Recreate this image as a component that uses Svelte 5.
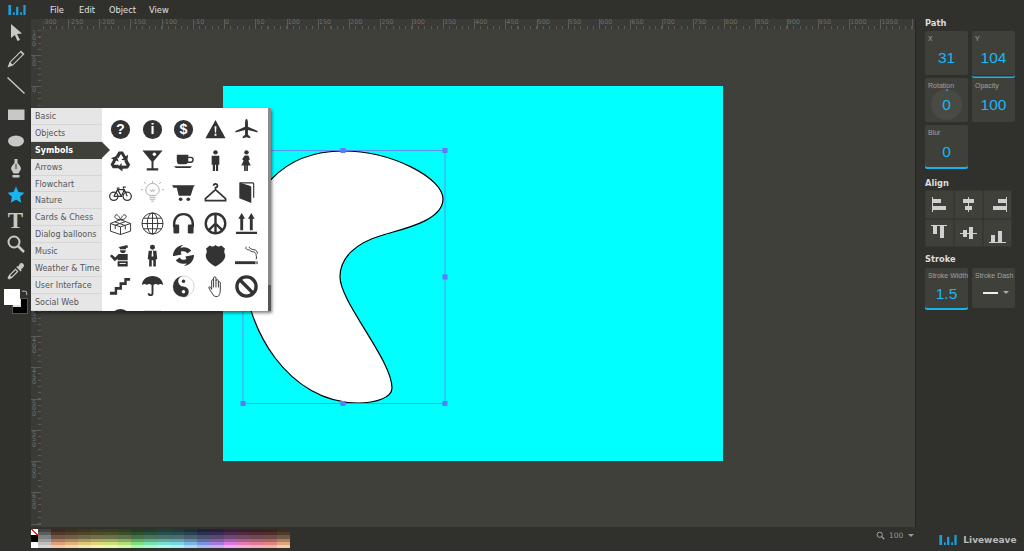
<script>
	const menus = ['File', 'Edit', 'Object', 'View'];
	const categories = ['Basic', 'Objects', 'Symbols', 'Arrows', 'Flowchart', 'Nature', 'Cards & Chess', 'Dialog balloons', 'Music', 'Weather & Time', 'User Interface', 'Social Web'];

	const hTicks = [];
	for (let v = -300; v <= 1050; v += 50) hTicks.push(v);
	const vTicks = [];
	for (let v = -100; v <= 650; v += 50) vTicks.push(v);

	const hues = [22, 34, 45, 55, 70, 88, 120, 150, 172, 186, 205, 228, 265, 295, 325, 345, 5, 25];
	const rows = [
		[40, 18], [30, 24], [22, 36], [32, 52], [60, 68], [85, 82]
	];
	const greys = [26, 36, 50, 62, 74, 84];
</script>

{#snippet logo(cls)}
	<svg class={cls} viewBox="0 0 19 11">
		<rect x="0" y="0" width="3" height="11" />
		<rect x="5" y="8" width="2" height="3" />
		<rect x="8.5" y="2" width="2.5" height="9" />
		<rect x="13" y="8" width="2" height="3" />
		<rect x="16.5" y="0" width="2.5" height="11" />
	</svg>
{/snippet}

<div class="app">
	<header class="topbar">
		{@render logo('logo')}
		<nav class="menu">
			{#each menus as m}<span>{m}</span>{/each}
		</nav>
	</header>

	<aside class="tools">
		<svg class="tool" viewBox="0 0 20 20"><path d="M5 2l11 9.500-5 .5 3 6-2.500 1-2.700-6L5 16z" /></svg>
		<svg class="tool" viewBox="0 0 20 20"><path d="M15 1.500l3.500 3.500L7 16.500 1.500 18.500 3.500 13zM4.500 13.500l2 2L16.500 5.500l-2-2z" /></svg>
		<svg class="tool" viewBox="0 0 20 20"><path d="M1.500 2.500L18.500 18.500" stroke="#c8c8c8" stroke-width="1.500" fill="none" /></svg>
		<svg class="tool gap" viewBox="0 0 20 20"><rect x="2" y="4.500" width="16.500" height="10.500" /></svg>
		<svg class="tool" viewBox="0 0 20 20"><ellipse cx="10" cy="10" rx="8" ry="5.500" /></svg>
		<svg class="tool" viewBox="0 0 20 20"><path d="M8.500 1h3v4c2 2 3.500 4 3.500 6l-2.500 4.500h-5L5 11c0-2 1.500-4 3.500-6zM6.500 17h7v2.500h-7z" /><path d="M10 6v5" stroke="#2e2e2a" stroke-width="1" /></svg>
		<svg class="tool star" viewBox="0 0 20 20"><path d="M10 1.500l2.500 5.500 6 .7-4.500 4 1.300 6L10 14.800 4.700 17.700 6 11.700l-4.500-4 6-.7z" /></svg>
		<span class="tool-t">T</span>
		<svg class="tool glass" viewBox="0 0 20 20"><circle cx="8" cy="8" r="5.500" fill="none" stroke="#c8c8c8" stroke-width="2" /><path d="M12 12l6 6" stroke="#c8c8c8" stroke-width="2.500" /></svg>
		<svg class="tool" viewBox="0 0 20 20"><path d="M14 2.500a2.500 2.500 0 0 1 3.500 3.500L15 8.500l.8.8-1.200 1.200-4.400-4.400 1.200-1.200.8.8zM9.500 7.500l3 3L6 17l-3 1.500L1.500 17 3 14zM9.500 9.200L4.200 14.500l1.300 1.300 5.300-5.300z" fill-rule="evenodd" /></svg>
		<div class="swatches">
			<i class="stroke-swatch"><b></b></i>
			<i class="fill-swatch"></i>
			<svg class="swap" viewBox="0 0 8 8"><path d="M1 2.500h3.500a2 2 0 0 1 2 2V7" fill="none" stroke="#ccc" stroke-width="1" /></svg>
		</div>
	</aside>

	<main class="workspace">
		<div class="corner"></div>
		<div class="ruler-h">
			{#each hTicks as t}<span>{t}</span>{/each}
			<span></span>
		</div>
		<div class="ruler-v">
			{#each vTicks as t}<span><em>{Math.abs(t)}</em></span>{/each}
			<span></span>
		</div>
		<div class="stage">
			<div class="artboard"></div>
			<svg class="drawing" viewBox="41 29 874 498">
				<path d="M343 151C392 151 443 178 443 199C443 222 398 230 383 235C355 243 340 258 340 277C340 302 392 360 392 388C392 398 375 403 358 403C290 403 243 330 243 260C243 190 285 151 343 151Z" fill="#fff" stroke="#000" stroke-width="1.200" />
				<rect x="243" y="150.500" width="202" height="253" fill="none" stroke="#6f78ff" stroke-width="0.800" />
				<g fill="#5f78ff">
					<rect x="240.500" y="401" width="5" height="5" />
					<rect x="340.500" y="148" width="5" height="5" />
					<rect x="340.500" y="401" width="5" height="5" />
					<rect x="442.500" y="148" width="5" height="5" />
					<rect x="442.500" y="274.500" width="5" height="5" />
					<rect x="442.500" y="401" width="5" height="5" />
				</g>
			</svg>
		</div>
	</main>

	<aside class="panel">
		<h3 class="path-title">Path</h3>
		<div class="cards">
			<div class="card"><label>X</label><strong>31</strong></div>
			<div class="card on"><label>Y</label><strong>104</strong></div>
			<div class="card"><label>Rotation</label><i class="dial"></i><strong>0</strong></div>
			<div class="card"><label>Opacity</label><strong>100</strong></div>
			<div class="card flush tall"><label>Blur</label><strong>0</strong></div>
		</div>
		<h3 class="align-title">Align</h3>
		<div class="align">
			<div><svg viewBox="0 0 29 29"><path d="M7 7h1v15H7z" /><path d="M8 9h8v4H8zM8 16h13v4H8z" /></svg></div>
			<div><svg viewBox="0 0 29 29"><path d="M14 7h1v15h-1z" /><path d="M9 9h11v4H9zM11 16h7v4h-7z" /></svg></div>
			<div><svg viewBox="0 0 29 29"><path d="M23 7h1v15h-1z" /><path d="M15 9h8v4h-8zM10 16h13v4H10z" /></svg></div>
			<div><svg viewBox="0 0 29 29"><path d="M6 6h16v1H6z" /><path d="M8 7h4v8H8zM15 7h4v12h-4z" /></svg></div>
			<div><svg viewBox="0 0 29 29"><path d="M6 14h17v1H6z" /><path d="M9 11h4v7H9zM15 8h4v12h-4z" /></svg></div>
			<div><svg viewBox="0 0 29 29"><path d="M6 23h17v1H6z" /><path d="M8 16h4v7H8zM15 12h4v11h-4z" /></svg></div>
		</div>
		<h3 class="stroke-title">Stroke</h3>
		<div class="cards">
			<div class="card short flush"><label>Stroke Width</label><strong>1.5</strong></div>
			<div class="card short"><label>Stroke Dash</label><div class="dash"><i></i><b></b></div></div>
		</div>
	</aside>

	<footer class="bottombar">
		<div class="palette">
			<div class="base">
				<i class="none"></i><i class="black"></i><i class="white"></i>
			</div>
			<div class="col">
				{#each greys as g}<i style="background:hsl(0,0%,{g}%)"></i>{/each}
			</div>
			{#each hues as h}
				<div class="col">
					{#each rows as r}<i style="background:hsl({h},{r[0]}%,{r[1]}%)"></i>{/each}
				</div>
			{/each}
		</div>
		<div class="zoom">
			<svg viewBox="0 0 12 12"><circle cx="5" cy="5" r="3.500" fill="none" stroke="#aaa" stroke-width="1.200" /><path d="M7.500 7.500l3.500 3.500" stroke="#aaa" stroke-width="1.500" /></svg>
			<span>100</span>
			<i class="caret"></i>
		</div>
		<div class="brand">
			{@render logo('logo small')}
			<span>Liveweave</span>
		</div>
	</footer>

	<section class="shapes">
		<ul class="cats">
			{#each categories as c}
				<li class:active={c === 'Symbols'}>{c}</li>
			{/each}
		</ul>
		<div class="symbols">
			<svg viewBox="0 0 24 24"><circle cx="12" cy="12" r="10" /><text x="12" y="17" class="inv">?</text></svg>
			<svg viewBox="0 0 24 24"><circle cx="12" cy="12" r="10" /><text x="12" y="17" class="inv">i</text></svg>
			<svg viewBox="0 0 24 24"><circle cx="12" cy="12" r="10" /><text x="12" y="17" class="inv">$</text></svg>
			<svg viewBox="0 0 24 24"><path d="M12 2L22.500 21H1.500z" /><path d="M11 8.500h2l-.4 7h-1.200zM11 16.500h2v2h-2z" fill="#fff" /></svg>
			<svg viewBox="0 0 24 24"><path d="M12 1c1 0 1.500 2 1.500 4v4l10 4.500v1.500l-10-2.500v5l2.500 2v1.500l-4-1-4 1v-1.500l2.500-2v-5l-10 2.500v-1.500l10-4.500V5c0-2 .5-4 1.500-4z" /></svg>

			<svg viewBox="0 0 24 24">
				<path d="M6.500 8.500L10 2.500h4.500L17.500 7.500 20 6l-1 6.500-6.300-1.300 2.500-1.500-2.700-4.500-2.500 4.300z" />
				<path d="M6.500 8.500L10 2.500h4.500L17.500 7.500 20 6l-1 6.500-6.300-1.300 2.500-1.500-2.700-4.500-2.500 4.300z" transform="rotate(120 12 13)" />
				<path d="M6.500 8.500L10 2.500h4.500L17.500 7.500 20 6l-1 6.500-6.300-1.300 2.500-1.500-2.700-4.500-2.500 4.300z" transform="rotate(240 12 13)" />
			</svg>
			<svg viewBox="0 0 24 24"><path d="M1.500 1.500h21L13 13v7h5v2.500H6V20h5v-7z" /><circle cx="14" cy="5.500" r="1.800" fill="#fff" /></svg>
			<svg viewBox="0 0 24 24"><path d="M5 6h12v2h2.500a2.500 2.500 0 0 1 0 6.500h-3c-1 1-2 1.500-3 1.500H8c-2 0-3-2-3-4zM17 9.500v3.500h2.500a1.700 1.700 0 0 0 0-3.500zM2 18h19l-2 1.800H4z" /></svg>
			<svg viewBox="0 0 24 24"><circle cx="12" cy="3.500" r="2.300" /><path d="M8 7h8v9.500h-1.200V23h-2.300v-6.500h-1V23H9.200v-6.500H8z" /></svg>
			<svg viewBox="0 0 24 24"><circle cx="12" cy="3.500" r="2.300" /><path d="M10 6.800h4l1.500 4-1.500 1.500 2.500 5h-3V23h-1.800v-5.700h-.4V23H9.500v-5.700h-3l2.500-5-1.500-1.500z" /></svg>

			<svg viewBox="0 0 24 24" class="line"><circle cx="5" cy="16" r="4.300" /><circle cx="19" cy="16" r="4.300" /><path d="M5 16l4-7h7l3 7M9 9l4 7h-8M16 9l-3 7M8 7.500h3M15 8V6.500h2.500" /></svg>
			<svg viewBox="0 0 24 24" class="line thin"><path d="M8.500 15c-3-2-3.500-4-3.500-5.500a7 7 0 0 1 14 0c0 1.500-.5 3.500-3.500 5.500zM9 17h6M9 19h6M10.500 21h3M9.500 9l1.500 2 1-2 1 2 1.500-2M12 0v2M3 1l2 2M21 1l-2 2M0 9h2M22 9h2" /></svg>
			<svg viewBox="0 0 24 24"><path d="M0 4.500h24l-1.500 1.500-3 9.500H7L5 7H1.500z" /><circle cx="9" cy="19" r="1.900" /><circle cx="17" cy="19" r="1.900" /></svg>
			<svg viewBox="0 0 24 24" class="line bold"><path d="M12 9V7a2 2 0 1 0-2-2M12 9L1.500 18.500v2h21v-2z" /></svg>
			<svg viewBox="0 0 24 24"><path d="M4.500 1.500l11 3.500a2 2 0 0 1 1.500 2V23L4.500 18z" /><path d="M5 2h13.500a1 1 0 0 1 1 1v14.500" fill="none" stroke="#333" stroke-width="1.200" /></svg>

			<svg viewBox="0 0 24 24" class="line thin-strong"><path d="M12 8L1.500 12v8L12 23.500 22.500 20v-8zM1.500 12L12 15.500 22.500 12M12 15.500v8M6 10.200L17 14.200v4M17.500 9.800L6.500 13.800v4M12 8C8 8 5 6 6.500 3.500 8.500 1.500 11 5 12 8c1-3 3.500-6.500 5.500-4.500C19 6 16 8 12 8z" /></svg>
			<svg viewBox="0 0 24 24" class="line thin-strong"><circle cx="12" cy="12" r="11" /><ellipse cx="12" cy="12" rx="5.500" ry="11" /><path d="M12 1v22M1 12h22M2.500 6.500h19M2.500 17.500h19" /></svg>
			<svg viewBox="0 0 24 24"><path d="M12 1C5 1 1 6 1 13v3h2.500v-3C3.500 7.500 7 3.500 12 3.500s8.500 4 8.500 9.500v3H23v-3c0-7-4-12-11-12z" /><rect x="1.500" y="13" width="6" height="9.500" rx="1.500" /><rect x="16.500" y="13" width="6" height="9.500" rx="1.500" /></svg>
			<svg viewBox="0 0 24 24" class="line peace"><circle cx="12" cy="12" r="10.200" /><path d="M12 2v20M12 12L4.800 19.200M12 12l7.200 7.200" /></svg>
			<svg viewBox="0 0 24 24"><path d="M7 1l3.500 6H8.500v12h-3V7H3.500zM17 1l3.500 6h-2v12h-3V7h-2zM1 20.500h22V23H1z" /></svg>

			<svg viewBox="0 0 24 24"><path d="M9.500 3.500L19 1l1 3h-2l-.5 1.500h-6L11 4zM11.500 6.500h6a3 3 0 0 1-6 0zM10 10.500h9.500V17H9v-1.500L6 18 1 12.500l2-1.500 3.500 3L10 10.500zM9 18h10.500v5.500H9z" /><path d="M11 19.800h6.500v1H11z" fill="#fff" /></svg>
			<svg viewBox="0 0 24 24"><circle cx="12" cy="3.500" r="2.600" /><path d="M8 7h8l1 9h-1.500v7.500h-2.700V17h-1.600v6.500H8.500V16H7z" /><path d="M11.500 7h1l.5 6h-2z" fill="#fff" /></svg>
			<svg viewBox="0 0 24 24"><path d="M1 12.500C1 6 6 1.500 12 1c-2 1-3 2-3 3 4-1.500 9 0 11 3l-4 3c-1.500-2.500-4-3-7-2l1 3-8 1.500zM23 11.500c0 6.500-5 11-11 11.500 2-1 3-2 3-3-4 1.500-9 0-11-3l4-3c1.500 2.500 4 3 7 2l-1-3 8-1.500z" /></svg>
			<svg viewBox="0 0 24 24"><path d="M6 1.500c2 1.500 4 1.500 6-.5 2 2 4 2 6 .5l4 3.500c-1.200 2-1.200 3.500 0 6 1 5-4 9.500-10 12.500C6 20.500 1 16 2 11c1.200-2.500 1.200-4 0-6z" /></svg>
			<svg viewBox="0 0 24 24"><path d="M0 18h21v3H0z" /><path d="M21 18h3v3h-3z" fill="#888" /><path d="M12 3c-2 1 0 3 2 3s2 2 4 2 4 1 4 3 1 3 0 5M15 3c-1 0 0 1 1 1.500s2 1.500 4 1.500 3.500 2 3.500 4" fill="none" stroke="#333" stroke-width="1" /></svg>

			<svg viewBox="0 0 24 24"><path d="M1 20.500v-3h5v-5h5v-5h5V3h6v3h-3.500v4.500h-5v5h-5v5z" /></svg>
			<svg viewBox="0 0 24 24"><path d="M12 1c6 0 11 4 11 9.500-2-1.500-4-1.500-5 0-1.500-1.500-3.500-1.500-5 0V19a3 3 0 0 1-6 0h2a1 1 0 0 0 2 0v-8.500c-1.500-1.500-3.500-1.500-5 0-1-1.500-3-1.500-5 0C1 5 6 1 12 1z" /></svg>
			<svg viewBox="0 0 24 24"><circle cx="12" cy="12" r="11" fill="#fff" stroke="#999" stroke-width=".4" /><path d="M12 1a11 11 0 0 0 0 22 5.500 5.500 0 0 0 0-11 5.500 5.500 0 0 1 0-11z" /><circle cx="12" cy="6.500" r="1.800" /><circle cx="12" cy="17.500" r="1.800" fill="#fff" /></svg>
			<svg viewBox="0 0 24 24" class="line thin-strong"><path d="M9 20c-1-2-3-4-4-7 0-1 1-1 2 0l1 2V6c0-1.500 2-1.500 2 0V3c0-1.500 2.500-1.500 2.500 0v3c0-1.500 2.500-1.500 2.500 0v2c0-1.300 2-1.300 2 0v8c0 3-1 4-1.500 5.500C15 23 10 23 9 20zM10 6v7M12.500 6v7M15 8v5" /></svg>
			<svg viewBox="0 0 24 24" class="line peace wide"><circle cx="12" cy="12" r="10" /><path d="M5 5l14 14" /></svg>

			<svg viewBox="0 0 24 24"><circle cx="12" cy="12" r="10" /></svg>
			<svg viewBox="0 0 24 24"><path d="M3 4h18v16H3z" /></svg>
		</div>
		<div class="thumb"></div>
	</section>
</div>

<style>
	:global(body) {
		margin: 0;
		background: #30302c;
	}
	.app {
		position: relative;
		width: 1024px;
		height: 551px;
		overflow: hidden;
		display: grid;
		grid-template-columns: 31px 1fr 109px;
		grid-template-rows: 19px 1fr 24px;
		background: #30302c;
		font-family: "DejaVu Sans", sans-serif;
		color: #ccc;
	}
	.topbar {
		grid-column: 1 / -1;
		display: flex;
		align-items: center;
		padding-left: 8px;
	}
	.logo {
		width: 18px;
		height: 10px;
		fill: #1c9fdc;
	}
	.menu {
		display: flex;
		margin-left: 24px;
		font-size: 8.300px;
		color: #e2e2e2;
	}
	.menu span:nth-child(1) { width: 29px; }
	.menu span:nth-child(2) { width: 30px; }
	.menu span:nth-child(3) { width: 40px; }

	.tools {
		display: flex;
		flex-direction: column;
		align-items: center;
		padding-top: 3px;
	}
	.tool {
		width: 20px;
		height: 20px;
		margin-bottom: 6.500px;
		fill: #c8c8c8;
		flex: none;
	}
	.gap { margin-top: 3px; }
	.star { fill: #19b5f1; margin-top: 1px; }
	.glass { margin-bottom: 7.500px; }
	.tool-t {
		height: 24px;
		margin-top: -2px;
		margin-bottom: 0;
		font: bold 23px/22px "Liberation Serif", serif;
		color: #c8c8c8;
	}
	.swatches {
		position: relative;
		width: 31px;
		height: 30px;
		flex: none;
	}
	.fill-swatch {
		position: absolute;
		left: 4px;
		top: 1px;
		width: 16px;
		height: 16px;
		background: #fff;
	}
	.stroke-swatch {
		position: absolute;
		left: 12px;
		top: 10px;
		width: 16px;
		height: 16px;
		background: #000;
		border: 1px solid #555;
		box-sizing: border-box;
	}
	.stroke-swatch b {
		position: absolute;
		left: 0;
		top: 0;
		width: 8px;
		height: 8px;
		border-right: 2px solid #ddd;
		border-bottom: 2px solid #ddd;
		box-sizing: border-box;
	}
	.swap {
		position: absolute;
		left: 21px;
		top: 1px;
		width: 7px;
		height: 7px;
	}

	.workspace {
		display: grid;
		grid-template-columns: 10px 1fr;
		grid-template-rows: 10px 1fr;
		background: #40403b;
		overflow: hidden;
		min-width: 0;
		min-height: 0;
	}
	.corner { background: #3a3a36; }
	.ruler-h, .ruler-v {
		background-color: #3a3a36;
		overflow: hidden;
		color: #6e6e67;
		font-size: 6.500px;
		line-height: 7px;
	}
	.ruler-h {
		display: flex;
	}
	.ruler-h span {
		flex: none;
		width: 31.250px;
		height: 10px;
		box-sizing: border-box;
		padding-left: 1px;
		background:
			linear-gradient(#5c5c55, #5c5c55) 0 0 / 1px 100% no-repeat,
			repeating-linear-gradient(90deg, #5c5c55 0 1px, transparent 1px 6.250px) 0 100% / 100% 3px no-repeat;
	}
	.ruler-h span:first-child {
		margin-left: -4.500px;
		padding-left: 5.500px;
	}
	.ruler-v {
		display: flex;
		flex-direction: column;
	}
	.ruler-v span {
		flex: none;
		height: 31.250px;
		width: 10px;
		box-sizing: border-box;
		padding-top: 2px;
		background:
			linear-gradient(#5c5c55, #5c5c55) 0 0 / 100% 1px no-repeat,
			repeating-linear-gradient(180deg, #5c5c55 0 1px, transparent 1px 6.250px) 100% 0 / 3px 100% no-repeat;
	}
	.ruler-v span:first-child { margin-top: -5.500px; padding-top: 7px; }
	.ruler-v em {
		display: block;
		width: 5px;
		margin-left: 1px;
		font-style: normal;
		line-height: 5.500px;
		word-break: break-all;
	}
	.stage {
		position: relative;
		overflow: hidden;
	}
	.artboard {
		position: absolute;
		left: 182px;
		top: 57px;
		width: 500px;
		height: 375px;
		background: #0ff;
	}
	.drawing {
		position: absolute;
		inset: 0;
		width: 874px;
		height: 498px;
	}

	.panel {
		border-left: 1px solid #262623;
		padding-left: 9px;
		box-sizing: border-box;
	}
	h3 {
		margin: 0;
		font-size: 8.300px;
		line-height: 10px;
		font-weight: bold;
		color: #ddd;
		padding-bottom: 3px;
	}
	.path-title { margin-top: -1px; }
	.cards {
		display: grid;
		grid-template-columns: 43px 43px;
		gap: 3px 4px;
	}
	.card {
		position: relative;
		height: 44px;
		background: #40403b;
		border-radius: 2px;
		text-align: center;
	}
	.card.on {
		box-shadow: 0 1.500px 0 #30302c, 0 3px 0 #16b3ee;
	}
	.card.flush {
		box-shadow: 0 2px 0 #16b3ee;
	}
	.card.tall { height: 42px; }
	.card label {
		position: absolute;
		left: 3px;
		top: 3px;
		font: 7px/9px "Liberation Sans", sans-serif;
		color: #a0a09a;
		white-space: nowrap;
	}
	.card strong {
		position: relative;
		display: block;
		padding-top: 17.500px;
		font: 400 15.500px/18px "Liberation Sans", sans-serif;
		color: #16b8f5;
	}
	.card.short strong { padding-top: 16.500px; }
	.dial {
		position: absolute;
		left: 6px;
		top: 11px;
		width: 31px;
		height: 31px;
		border-radius: 50%;
		background: #4a4a45;
	}
	.dial::before {
		content: "";
		position: absolute;
		left: 14.500px;
		top: 0;
		width: 2px;
		height: 2px;
		background: #3e7ff0;
	}
	.align-title { margin-top: 11px; padding-bottom: 2px; }
	.align {
		display: grid;
		grid-template-columns: repeat(3, 29px);
		grid-auto-rows: 28.500px;
		width: 87px;
	}
	.align div {
		background: #40403b;
		box-shadow: inset 0 0 0 .5px #30302c;
	}
	.align svg {
		display: block;
		width: 29px;
		height: 29px;
		fill: #d0d0d0;
	}
	.stroke-title { margin-top: 7px; padding-bottom: 4px; }
	.card.short { height: 40px; }
	.dash {
		display: flex;
		align-items: center;
		justify-content: center;
		gap: 5px;
		padding-top: 20px;
		padding-left: 5px;
	}
	.dash i {
		width: 15px;
		height: 2px;
		background: #eee;
	}
	.dash b {
		width: 0;
		height: 0;
		border: 3px solid transparent;
		border-top-color: #aaa;
		margin-top: 3px;
	}

	.bottombar {
		grid-column: 1 / -1;
		display: flex;
		align-items: flex-start;
		padding-left: 31px;
		padding-top: 2px;
	}
	.palette {
		display: flex;
		width: 259px;
		height: 19px;
	}
	.base {
		width: 7px;
		display: flex;
		flex-direction: column;
	}
	.base i { flex: 1; display: block; }
	.none { background: linear-gradient(45deg, #fff 42%, #e22 42% 58%, #fff 58%); }
	.black { background: #000; }
	.white { background: #fff; }
	.col {
		flex: 1;
		display: flex;
		flex-direction: column;
	}
	.col i { flex: 1; display: block; }
	.zoom {
		display: flex;
		align-items: center;
		margin-left: 586px;
		margin-top: 2px;
		font-size: 7.500px;
		color: #999;
	}
	.zoom svg { width: 9px; height: 9px; margin-right: 4px; }
	.caret {
		width: 0;
		height: 0;
		margin: 3px 0 0 5px;
		border: 3px solid transparent;
		border-top-color: #999;
	}
	.brand {
		display: flex;
		align-items: center;
		margin-left: 25px;
		margin-top: 6px;
		font-size: 9px;
		font-weight: bold;
		color: #bbb;
	}
	.logo.small {
		margin-right: 6px;
	}

	.shapes {
		position: absolute;
		left: 31px;
		top: 108px;
		width: 239px;
		height: 203px;
		display: flex;
		background: #fff;
		box-shadow: 2px 2px 3px rgba(0, 0, 0, 0.5);
	}
	.cats {
		flex: none;
		width: 71px;
		margin: 0;
		padding: 0;
		list-style: none;
		background: #e6e6e6;
		font-size: 8px;
		color: #555;
	}
	.cats li {
		position: relative;
		height: 16.900px;
		line-height: 17px;
		box-sizing: border-box;
		padding-left: 4px;
		border-bottom: 1px solid #d6d6d6;
		white-space: nowrap;
	}
	.cats li.active {
		background: #40403b;
		color: #fff;
		font-weight: bold;
		border-bottom: 0;
	}
	.cats li.active::after {
		content: "";
		position: absolute;
		left: 71px;
		top: 0;
		border: 8.500px solid transparent;
		border-left: 8px solid #40403b;
		border-right: 0;
	}
	.symbols {
		flex: 1;
		min-width: 0;
		height: 203px;
		overflow: hidden;
		display: grid;
		grid-template-columns: repeat(5, 31.500px);
		grid-auto-rows: 31.500px;
		padding: 5.500px 0 0 3px;
		box-sizing: border-box;
	}
	.symbols svg {
		width: 23px;
		height: 23px;
		margin: 4.250px;
		fill: #333;
		display: block;
	}
	.symbols text {
		font: bold 15px "Liberation Sans", sans-serif;
		text-anchor: middle;
		fill: #fff;
	}
	.symbols .line {
		fill: none;
		stroke: #333;
		stroke-width: 1.300;
	}
	.symbols .line.thin {
		stroke: #999;
		stroke-width: .8;
	}
	.symbols .line.thin-strong { stroke-width: 1; }
	.symbols .line.bold { stroke-width: 1.800; }
	.symbols .line.peace { stroke-width: 2.500; }
	.symbols .line.wide { stroke-width: 3.500; }
	.thumb {
		position: absolute;
		right: -1px;
		top: 0;
		width: 3px;
		height: 203px;
		background: linear-gradient(#8a8a8a 0 177px, #555 177px);
	}
</style>
